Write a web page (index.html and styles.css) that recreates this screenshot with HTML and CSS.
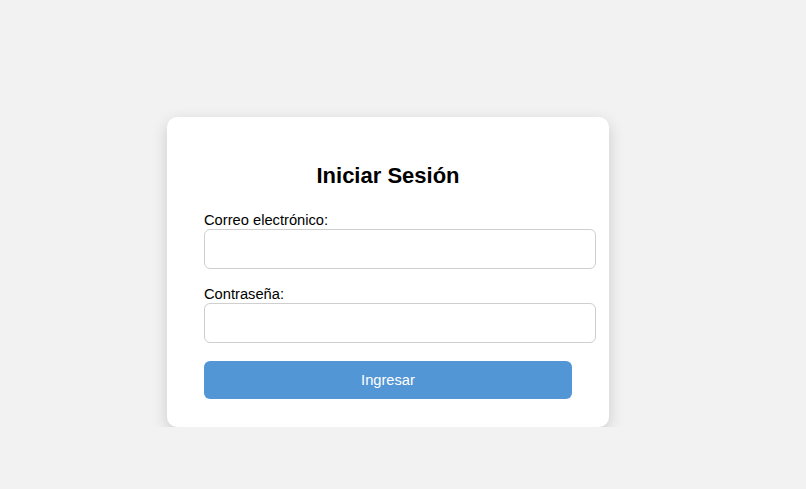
FILE: index.html
```html
<!DOCTYPE html>
<html lang="es">
<head>
<meta charset="utf-8">
<title>Iniciar Sesión</title>
<link rel="stylesheet" href="styles.css">
</head>
<body>
<div class="page">
  <div class="card">
    <h2 class="title">Iniciar Sesión</h2>
    <form class="form">
      <label class="label" for="email">Correo electrónico:</label>
      <input class="input" id="email" type="email">
      <label class="label label-second" for="pass">Contraseña:</label>
      <input class="input" id="pass" type="password">
      <button class="btn" type="button">Ingresar</button>
    </form>
  </div>
</div>
</body>
</html>
```
FILE: styles.css
```css
html, body {
  margin: 0;
  padding: 0;
  background: #f2f2f2;
  font-family: "Liberation Sans", Arial, sans-serif;
  color: #000;
}
.page {
  padding: 117px 0 0 167px;
}
.card {
  box-sizing: border-box;
  width: 442px;
  height: 310px;
  background: #fff;
  border-radius: 10px;
  box-shadow: 0 5px 16px rgba(0, 0, 0, 0.16);
  padding: 45px 13px 0 37px;
}
.title {
  margin: 0 0 21px 0;
  font-size: 22px;
  line-height: 28px;
  font-weight: bold;
  text-align: center;
  padding-right: 24px;
}
.form {
  display: flex;
  flex-direction: column;
  align-items: flex-start;
}
.label {
  display: block;
  font-size: 14.7px;
  line-height: 18px;
  margin-top: 0;
}
.label-second {
  margin-top: 16px;
}
.input {
  box-sizing: border-box;
  width: 392px;
  height: 40px;
  margin: 0;
  border: 1px solid #cfcfcf;
  border-radius: 6px;
  background: #fff;
  font-size: 16px;
  padding: 0 10px;
}
.btn {
  box-sizing: border-box;
  width: 368px;
  height: 38px;
  margin-top: 18px;
  border: none;
  border-radius: 6px;
  background: #5396d6;
  color: #fff;
  font-family: "Liberation Sans", Arial, sans-serif;
  font-size: 14.7px;
  cursor: pointer;
}
```
